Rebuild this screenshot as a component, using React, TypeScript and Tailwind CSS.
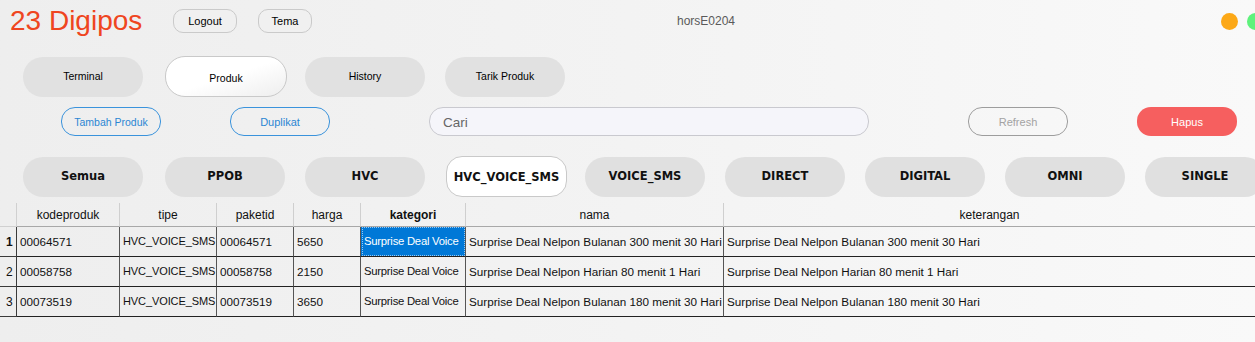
import React from "react";

const UI = { fontFamily: '"Liberation Sans", Arial, sans-serif' };
const BOLD = { fontFamily: '"DejaVu Sans", Verdana, sans-serif' };

const rows = [
  ["00064571", "HVC_VOICE_SMS", "00064571", "5650", "Surprise Deal Voice", "Surprise Deal Nelpon Bulanan 300 menit 30 Hari", "Surprise Deal Nelpon Bulanan 300 menit 30 Hari"],
  ["00058758", "HVC_VOICE_SMS", "00058758", "2150", "Surprise Deal Voice", "Surprise Deal Nelpon Harian 80 menit 1 Hari", "Surprise Deal Nelpon Harian 80 menit 1 Hari"],
  ["00073519", "HVC_VOICE_SMS", "00073519", "3650", "Surprise Deal Voice", "Surprise Deal Nelpon Bulanan 180 menit 30 Hari", "Surprise Deal Nelpon Bulanan 180 menit 30 Hari"],
];

const headers = ["kodeproduk", "tipe", "paketid", "harga", "kategori", "nama", "keterangan"];

const cellFont = [
  "text-[11.7px]",
  "text-[11px] tracking-[-0.1px]",
  "text-[11.7px]",
  "text-[11.7px]",
  "text-[11.3px] tracking-[-0.25px]",
  "text-[11.7px]",
  "text-[11.7px]",
];

const chips = [
  { t: "Semua", ml: "ml-[23px]" },
  { t: "PPOB", ml: "ml-[22px]" },
  { t: "HVC", ml: "ml-[20px]" },
  { t: "HVC_VOICE_SMS", ml: "ml-[21px]", active: true },
  { t: "VOICE_SMS", ml: "ml-[18px]" },
  { t: "DIRECT", ml: "ml-[20px]" },
  { t: "DIGITAL", ml: "ml-[20px]" },
  { t: "OMNI", ml: "ml-[20px]" },
  { t: "SINGLE", ml: "ml-[20px]" },
];

export default function App() {
  return (
    <div
      className="w-[1255px] h-[342px] overflow-hidden bg-gradient-to-r from-[#eeeeee] via-[#f3f3f3] to-[#f9f9f9] text-black"
      style={UI}
    >
      {/* top bar */}
      <div className="flex items-center h-[42px] pl-[10px]">
        <div className="w-[133px] text-[28px] leading-none text-[#ef4520] whitespace-nowrap">23 Digipos</div>
        <button className="ml-[30px] w-[64px] h-[24px] rounded-[10px] border border-[#cacaca] bg-[#f0f0f0] text-[11px]">Logout</button>
        <button className="ml-[21px] w-[54px] h-[24px] rounded-[10px] border border-[#cacaca] bg-[#f0f0f0] text-[11px]">Tema</button>
        <div className="ml-[365px] text-[12px] text-[#5a5a5a]">horsE0204</div>
        <div className="ml-auto mr-[-9px] flex items-center gap-[9px]">
          <div className="w-[17px] h-[17px] rounded-full bg-[#fca817]" />
          <div className="w-[17px] h-[17px] rounded-full bg-[#5ef27c]" />
        </div>
      </div>

      {/* main nav */}
      <div className="flex items-center mt-[14px] h-[41px]">
        <button className="ml-[23px] w-[120px] h-[40px] rounded-[20px] bg-[#e1e1e1] text-[10.5px] pt-[1px]">Terminal</button>
        <button className="ml-[22px] w-[122px] h-[41px] rounded-[20px] border border-[#c9c9c9] bg-gradient-to-br from-white via-white to-[#eeeeee] text-[10.5px] pt-[4px]">Produk</button>
        <button className="ml-[18px] w-[120px] h-[40px] rounded-[20px] bg-[#e1e1e1] text-[10.5px] pt-[1px]">History</button>
        <button className="ml-[20px] w-[120px] h-[40px] rounded-[20px] bg-[#e1e1e1] text-[10.5px] pt-[1px]">Tarik Produk</button>
      </div>

      {/* action row */}
      <div className="flex items-center mt-[10px] h-[29px]">
        <button className="ml-[61px] w-[100px] h-[29px] rounded-[14px] border border-[#3a93dc] text-[10.5px] text-[#2b86d3] pt-[2px]">Tambah Produk</button>
        <button className="ml-[69px] w-[100px] h-[29px] rounded-[14px] border border-[#3a93dc] text-[11px] text-[#2b86d3] pt-[2px]">Duplikat</button>
        <div className="ml-[99px] w-[440px] h-[29px] rounded-[14px] border border-[#c9c9cf] bg-[#f5f5fa] flex items-center pl-[13px] pt-[3px] text-[13.5px] text-[#666]">Cari</div>
        <button className="ml-[99px] w-[100px] h-[29px] rounded-[14px] border border-[#9d9d9d] text-[11px] text-[#a3a3a3] pt-[2px]">Refresh</button>
        <button className="ml-[69px] w-[100px] h-[29px] rounded-[14px] bg-[#f65f5f] text-[11px] text-white pt-[2px]">Hapus</button>
      </div>

      {/* category chips */}
      <div className="flex items-center mt-[20px] h-[41px] whitespace-nowrap">
        {chips.map((c) =>
          c.active ? (
            <button
              key={c.t}
              className={`${c.ml} shrink-0 w-[121px] h-[41px] rounded-[16px] border border-[#c9c9c9] bg-white text-[11.5px] font-bold text-[#111] pt-[3px]`}
              style={BOLD}
            >
              {c.t}
            </button>
          ) : (
            <button
              key={c.t}
              className={`${c.ml} shrink-0 w-[120px] h-[40px] rounded-[20px] bg-[#e0e0e0] text-[11.5px] font-bold text-[#111] pt-[1px]`}
              style={BOLD}
            >
              {c.t}
            </button>
          )
        )}
      </div>

      {/* table */}
      <div className="mt-[6px] grid grid-cols-[17px_103px_97px_77px_67px_105px_258px_531px] text-[12px] text-[#111]">
        <div className="h-[24px] border-r border-b border-[#d0d0d0]" />
        {headers.map((h, i) => (
          <div
            key={h}
            className={`h-[24px] flex items-center justify-center border-b border-[#a8a8a8] ${i < 6 ? "border-r border-r-[#cfcfcf]" : ""} ${h === "kategori" ? "font-bold" : ""}`}
          >
            {h}
          </div>
        ))}
        {rows.map((r, ri) => (
          <React.Fragment key={ri}>
            <div className={`h-[30px] flex items-center pl-[6px] border-r border-b border-[#3a3a3a] ${ri === 0 ? "font-bold" : ""}`}>
              {ri + 1}
            </div>
            {r.map((c, ci) => {
              const sel = ri === 0 && ci === 4;
              return (
                <div
                  key={ci}
                  className={`h-[30px] flex items-center whitespace-nowrap overflow-hidden border-b border-b-[#222] ${cellFont[ci]} ${ci < 6 ? "border-r border-r-[#555]" : ""} ${
                    sel ? "bg-[#0078d7] text-white pl-[1px]" : "pl-[3px]"
                  }`}
                >
                  {sel ? (
                    <div className="h-full w-full flex items-center pl-[1px] border border-dotted border-[#9cc9ef]">{c}</div>
                  ) : (
                    c
                  )}
                </div>
              );
            })}
          </React.Fragment>
        ))}
      </div>
    </div>
  );
}
